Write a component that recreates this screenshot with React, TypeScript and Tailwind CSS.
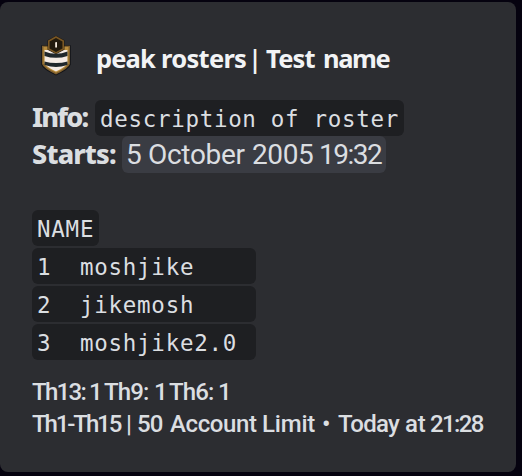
const members = ["1  moshjike    ", "2  jikemosh    ", "3  moshjike2.0 "];

function Crest() {
  return (
    <svg className="h-[42px] w-[32px] shrink-0" viewBox="0 0 32 42">
      <path d="M1.3 10.2H30.7V29.5Q29.5 34.2 16 40.4Q2.5 34.2 1.3 29.5Z" fill="#111216" />
      <path d="M2 10.7H30V29Q28.5 33.5 16 39.4Q3.5 33.5 2 29Z" fill="#80602e" />
      <path d="M3.5 12H28.5V28.4Q27 32.4 16 37.7Q5 32.4 3.5 28.4Z" fill="#b98d3d" />
      <path d="M4.6 15H27.4V28Q26 31.8 16 36.6Q6 31.8 4.6 28Z" fill="#f5ebe4" />
      <path d="M4.5 16.5Q10 18.8 16 18.8Q22 18.8 27.5 16.5V20.9Q22 22.8 16 22.8Q10 22.8 4.5 20.9Z" fill="#20272b" />
      <path d="M4.5 26.4Q10 28 16 28Q22 28 27.5 26.4V30Q21 32 16 32Q11 32 4.5 30Z" fill="#20272b" />
      <path d="M16 .7L24.4 5.2V14.7L16 19.2L7.6 14.7V5.2Z" fill="#15120e" />
      <path d="M16 2L23.2 6V14L16 17.9L8.8 14V6Z" fill="#221a0d" stroke="#7a5724" strokeWidth="1.6" />
      <path d="M15 7.6L17 7V12.6H15.2V8.4Z" fill="#f4e9dc" />
    </svg>
  );
}

export default function App() {
  return (
    <div className="h-[476px] w-[522px] bg-[#05020f] pt-[2px] font-['Noto_Sans',sans-serif]">
      <article className="h-[470px] w-[516px] rounded-lg bg-[#2c2d31] pl-8 pt-8 text-[#dbdee1]">
        <header className="flex h-[48px] items-center">
          <div className="-mt-1 flex w-16 pl-2">
            <Crest />
          </div>
          <h1 className="flex whitespace-pre text-[25.5px] font-bold leading-[48px] text-[#f2f3f5]">
            <span className="w-[65px] tracking-[-0.9px]">peak</span>
            <span className="w-[87px] tracking-[-0.7px]">rosters</span>
            <span className="w-[18px] font-semibold">|</span>
            <span className="w-[57px] tracking-[-0.8px]">Test</span>
            <span className="tracking-[-1.4px]">name</span>
          </h1>
        </header>
        <div className="mt-[18px] flex h-[36px] items-center">
          <b className="-mt-[3px] w-[63px] whitespace-pre text-[27px] font-extrabold leading-[33px] tracking-[-1.8px]">Info:</b>
          <code className="h-[36px] w-[309px] whitespace-pre rounded-md bg-[#1e1f22] pl-[5px] font-['DejaVu_Sans_Mono',monospace] text-[22.5px] leading-[38px] tracking-[0.69px]">description of roster</code>
        </div>
        <div className="flex h-[37px] items-center">
          <b className="-mt-px w-[90px] whitespace-pre text-[27px] font-extrabold leading-[36px] tracking-[-0.8px]">Starts:</b>
          <time className="flex h-[37px] w-[264px] whitespace-pre rounded-md bg-[#3a3c43] pl-[4px] font-['Roboto',sans-serif] text-[28px] leading-[38px]">
            <span className="w-[22px]">5</span>
            <span className="w-[104px] tracking-[-0.3px]">October</span>
            <span className="w-[67px] tracking-[-0.4px]">2005</span>
            <span className="tracking-[-1.5px]">19:32</span>
          </time>
        </div>
        <div className="mt-[37px] flex flex-col items-start gap-[2px] text-[22.5px] leading-[38px] tracking-[0.75px]">
          <code className="h-[36px] w-[67px] whitespace-pre rounded-md bg-[#1e1f22] pl-[5px] font-['DejaVu_Sans_Mono',monospace]">NAME</code>
          {members.map((member) => (
            <code key={member} className="h-[36px] w-[224px] whitespace-pre rounded-md bg-[#1e1f22] pl-[5px] font-['DejaVu_Sans_Mono',monospace]">{member}</code>
          ))}
        </div>
        <footer className="mt-4 whitespace-pre font-['Roboto',sans-serif] text-[24px] font-medium leading-[32px] tracking-[-0.9px]">
          <p className="flex">
            <span className="w-[57px] tracking-[-1.7px]">Th13:</span>
            <span className="w-[15px]">1</span>
            <span className="w-[50px]">Th9:</span>
            <span className="w-[15px]">1</span>
            <span className="w-[49px]">Th6:</span>
            <span>1</span>
          </p>
          <p className="flex">
            <span className="w-[94px] tracking-[-2.1px]">Th1-Th15</span>
            <span className="w-[11px]">|</span>
            <span className="w-[33px]">50</span>
            <span className="w-[92px] tracking-[-0.4px]">Account</span>
            <span className="w-[60px] tracking-[-0.2px]">Limit</span>
            <span className="w-[16px]">•</span>
            <span className="w-[67px] tracking-[-0.7px]">Today</span>
            <span className="w-[25px] tracking-[-0.2px]">at</span>
            <span className="tracking-[-1.6px]">21:28</span>
          </p>
        </footer>
      </article>
    </div>
  );
}
